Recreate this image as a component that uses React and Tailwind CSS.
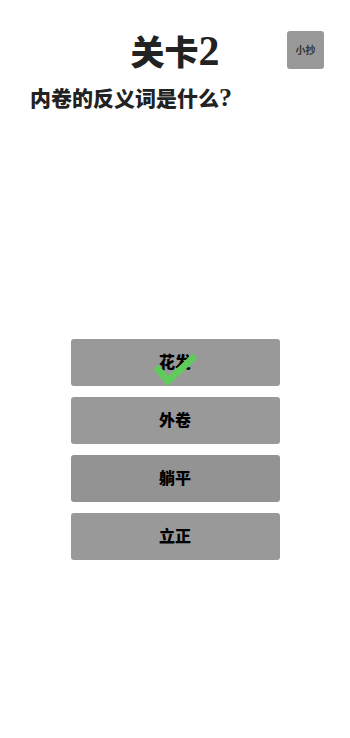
export default function App() {
  const options = [
    { label: "花发", bg: "bg-[#999999]", correct: true },
    { label: "外卷", bg: "bg-[#999999]" },
    { label: "躺平", bg: "bg-[#939393]" },
    { label: "立正", bg: "bg-[#999999]" },
  ];
  const font = { fontFamily: '"Liberation Serif", "Noto Sans CJK SC", serif' };

  return (
    <div className="min-h-[738px] w-[350px] bg-white text-[#222]" style={font}>
      <div className="grid h-[70px] grid-cols-[1fr_auto_1fr] items-center pt-[30px]">
        <div />
        <h1 className="h-[40px] text-[34px] font-black leading-[40px]">
          关卡<span className="text-[42px] leading-none">2</span>
        </h1>
        <button className="mr-[26px] flex h-[38px] w-[37px] items-center justify-self-end rounded-[3px] bg-[#999999] text-[10px] font-bold text-[#333]">
          <span className="w-full text-center">小抄</span>
        </button>
      </div>
      <p className="mt-[15px] h-[26px] pl-[30px] text-[21px] font-black leading-[26px]">
        内卷的反义词是什么<span className="text-[26px] leading-none">?</span>
      </p>

      <div className="mt-[228px] flex flex-col items-center gap-[11px]">
        {options.map((o) => (
          <div
            key={o.label}
            className={`relative flex h-[47px] w-[209px] items-center justify-center rounded-[3px] ${o.bg} text-[16px] font-black text-black`}
          >
            {o.label}
            {o.correct && (
              <svg className="absolute left-[82px] top-[14px]" width="46" height="33" viewBox="0 0 46 33">
                <path d="M3 14 L15 28 L42 3" fill="none" stroke="#5fcb5a" strokeWidth="7" />
              </svg>
            )}
          </div>
        ))}
      </div>
    </div>
  );
}
